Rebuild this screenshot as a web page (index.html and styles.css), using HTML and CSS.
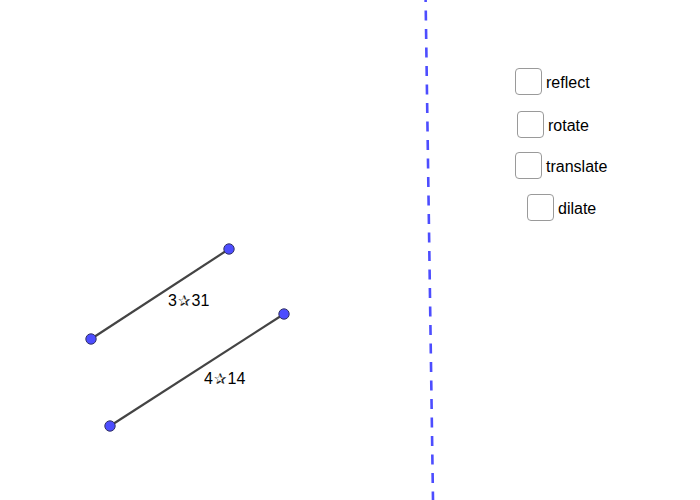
FILE: index.html
```html
<!DOCTYPE html>
<html>
<head>
<meta charset="utf-8">
<link rel="stylesheet" href="styles.css">
</head>
<body>
<div class="canvas">
  <svg class="geo" width="700" height="500" viewBox="0 0 700 500">
    <line x1="425.5" y1="-8" x2="433" y2="500" class="mirror"/>
    <line x1="91" y1="339" x2="229" y2="249" class="seg"/>
    <line x1="110" y1="426" x2="284" y2="314" class="seg"/>
    <circle cx="91" cy="339" r="5.2" class="pt"/>
    <circle cx="229" cy="249" r="5.2" class="pt"/>
    <circle cx="110" cy="426" r="5.2" class="pt"/>
    <circle cx="284" cy="314" r="5.2" class="pt"/>
  </svg>
  <div class="label l1">3<span class="star">✰</span>31</div>
  <div class="label l2">4<span class="star">✰</span>14</div>

  <div class="check c1"><span class="box"></span><span class="txt">reflect</span></div>
  <div class="check c2"><span class="box"></span><span class="txt">rotate</span></div>
  <div class="check c3"><span class="box"></span><span class="txt">translate</span></div>
  <div class="check c4"><span class="box"></span><span class="txt">dilate</span></div>
</div>
</body>
</html>
```
FILE: styles.css
```css
html, body {
  margin: 0;
  padding: 0;
  background: #ffffff;
}
.canvas {
  position: relative;
  width: 700px;
  height: 500px;
  overflow: hidden;
  font-family: "Liberation Sans", Arial, sans-serif;
  color: #000;
}
.geo {
  position: absolute;
  left: 0;
  top: 0;
}
.mirror {
  stroke: #4d4dff;
  stroke-width: 2.6;
  stroke-dasharray: 10 8.5;
}
.seg {
  stroke: #444444;
  stroke-width: 2.2;
}
.pt {
  fill: #4d4dff;
  stroke: #333366;
  stroke-width: 1;
}
.label {
  position: absolute;
  font-size: 16px;
  line-height: 18px;
  white-space: nowrap;
}
.star {
  font-family: "DejaVu Sans", sans-serif;
  font-size: 15px;
  color: #222;
  margin: 0 1px;
}
.l1 { left: 168px; top: 292px; }
.l2 { left: 204px; top: 370px; }

.check {
  position: absolute;
  display: flex;
  align-items: center;
  gap: 4px;
}
.box {
  box-sizing: border-box;
  width: 27px;
  height: 27px;
  border: 1.5px solid #9a9a9a;
  border-radius: 4px;
  background: #fff;
}
.txt {
  font-size: 16px;
  line-height: 18px;
  padding-top: 2px;
}
.c1 { left: 515px; top: 68px; }
.c2 { left: 517px; top: 111px; }
.c3 { left: 515px; top: 152px; }
.c4 { left: 527px; top: 194px; }
```
